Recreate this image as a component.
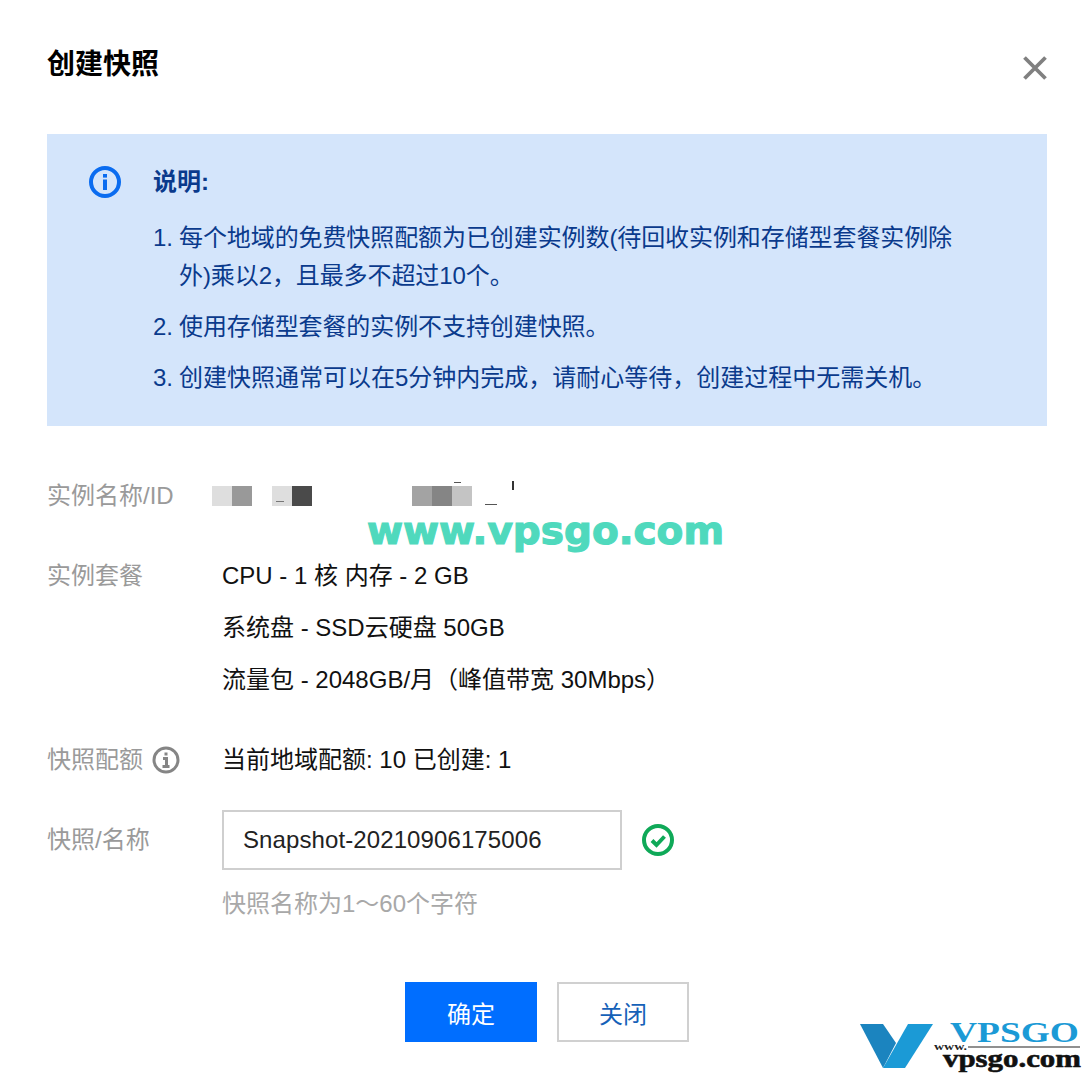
<div class="dialog">
  <header class="head">
    <h1>创建快照</h1>
    <svg class="close" viewBox="0 0 24 24" aria-label="关闭"><path d="M1.500 1.500 22.500 22.500M22.500 1.500 1.500 22.500" /></svg>
  </header>

  <section class="notice">
    <svg class="notice-icon" viewBox="0 0 32 32">
      <circle cx="16" cy="16" r="14" />
      <rect x="14" y="8" width="4" height="3.600" />
      <rect x="14" y="13.500" width="4" height="10.500" />
    </svg>
    <div class="notice-body">
      <h2>说明:</h2>
      <ol>
        <li><span class="n">1.</span><span class="tight">每个地域的免费快照配额为已创建实例数(待回收实例和存储型套餐实例除<br />外)乘以2，且最多不超过10个。</span></li>
        <li><span class="n">2.</span><span class="tight">使用存储型套餐的实例不支持创建快照。</span></li>
        <li><span class="n">3.</span><span>创建快照通常可以在5分钟内完成，请耐心等待，创建过程中无需关机。</span></li>
      </ol>
    </div>
  </section>

  <div class="form">
    <div class="row row-id">
      <div class="label">实例名称/ID</div>
      <div class="mask">
        <i class="m a"></i><i class="m b"></i><i class="gap1"></i><i class="m a"></i><i class="m c"></i><i class="gap2"></i><i class="m d"></i><i class="m e"></i><i class="m a2"></i>
        <i class="speck s1"></i><i class="speck s2"></i><i class="speck s3"></i><i class="speck s4"></i>
      </div>
    </div>
    <div class="row row-plan">
      <div class="label">实例套餐</div>
      <div class="value lines">
        <div>CPU - 1 核 内存 - 2 GB</div>
        <div>系统盘 - SSD云硬盘 50GB</div>
        <div>流量包 - 2048GB/月（峰值带宽 30Mbps）</div>
      </div>
    </div>
    <div class="row row-quota">
      <div class="label with-icon">快照配额
        <svg class="hint" viewBox="0 0 28 28">
          <circle cx="14" cy="14" r="12" />
          <rect x="12.500" y="6.500" width="3" height="3" />
          <path d="M11 12.500h3.500V20M10.500 20.500h7" />
        </svg>
      </div>
      <div class="value">当前地域配额: 10 已创建: 1</div>
    </div>
    <div class="row row-name">
      <div class="label">快照/名称</div>
      <div class="value">
        <div class="input-line">
          <div class="input">Snapshot-20210906175006</div>
          <svg class="ok" viewBox="0 0 32 32">
            <circle cx="16" cy="16" r="14" />
            <path d="M10 16.500 14.500 21 22.500 12.500" />
          </svg>
        </div>
        <div class="help">快照名称为1～60个字符</div>
      </div>
    </div>
  </div>

  <div class="actions">
    <button class="btn primary">确定</button>
    <button class="btn">关闭</button>
  </div>

  <div class="watermark">www.vpsgo.com</div>
  <svg class="logo" viewBox="0 -14 222 68">
    <path d="M0 4H23L36 23 23 48Z" fill="#1b84bf" />
    <path d="M48 4H73L45 48H23Z" fill="#1b9ad6" />
    <text x="90" y="22" class="logo-big" textLength="129" lengthAdjust="spacingAndGlyphs">VPSGO</text>
    <text x="74" y="30" class="logo-www" textLength="33" lengthAdjust="spacingAndGlyphs">www.</text>
    <rect x="108" y="26.500" width="112" height="1" fill="#222" />
    <text x="83" y="47" class="logo-small" textLength="138" lengthAdjust="spacingAndGlyphs">vpsgo.com</text>
  </svg>
</div>

<style>
  :global(body) {
    margin: 0;
    background: #fff;
  }

  .dialog {
    position: relative;
    box-sizing: border-box;
    width: 1092px;
    height: 1074px;
    overflow: hidden;
    padding: 0 45px 0 47px;
    font-family: "Liberation Sans", "Noto Sans CJK SC", sans-serif;
    font-size: 24px;
    color: #111;
  }

  .head {
    display: flex;
    justify-content: space-between;
    align-items: center;
    height: 134px;
    padding-bottom: 4px;
    box-sizing: border-box;
  }

  h1 {
    margin: 0;
    font-size: 28px;
    line-height: 36px;
    font-weight: 700;
    color: #000;
  }

  .close {
    width: 24px;
    height: 24px;
    margin-top: 6px;
    fill: none;
    stroke: #808080;
    stroke-width: 3.800;
  }

  .notice {
    display: flex;
    height: 292px;
    box-sizing: border-box;
    padding: 30px 0 0 42px;
    background: #d4e5fb;
    color: #0a3a8c;
  }

  .notice-icon {
    flex: none;
    width: 32px;
    height: 32px;
    margin: 2px 32px 0 0;
  }

  .notice-icon circle {
    fill: none;
    stroke: #0a6cf0;
    stroke-width: 4;
  }

  .notice-icon rect {
    fill: #0a6cf0;
  }

  h2 {
    margin: 0;
    font-size: 24px;
    line-height: 36px;
    font-weight: 700;
    color: #0a3a8c;
  }

  ol {
    list-style: none;
    margin: 19px 0 0;
    padding: 0;
  }

  li {
    display: flex;
    line-height: 38px;
    margin-bottom: 13px;
  }

  .tight {
    letter-spacing: -0.090px;
  }

  .n {
    flex: none;
    width: 26px;
  }

  .form {
    padding-top: 50px;
  }

  .row {
    display: flex;
  }

  .label {
    flex: none;
    width: 175px;
    line-height: 40px;
    color: #9a9a9a;
  }

  .with-icon {
    display: flex;
    align-items: center;
    gap: 9px;
    height: 40px;
  }

  .hint {
    width: 28px;
    height: 28px;
    fill: none;
    stroke: #858585;
    stroke-width: 3;
  }

  .hint rect {
    fill: #858585;
    stroke: none;
  }

  .value {
    line-height: 40px;
  }

  .row-id {
    height: 40px;
    margin-bottom: 40px;
  }

  .mask {
    position: relative;
    display: flex;
    align-items: center;
    height: 40px;
  }

  .m {
    display: block;
    width: 20px;
    height: 20px;
  }

  .a { background: #dedede; }
  .b { background: #999; }
  .c { background: #4a4a4a; }
  .d { background: #a3a3a3; }
  .e { background: #858585; }
  .a2 { background: #c4c4c4; }
  .mask > .m:first-child { margin-left: -10px; }
  .gap1 { width: 20px; }
  .gap2 { width: 100px; }

  .speck {
    position: absolute;
    display: block;
    background: #333;
  }

  .s1 { left: 54px; top: 25px; width: 8px; height: 1px; background: #777; }
  .s2 { left: 232px; top: 6px; width: 7px; height: 1px; background: #555; }
  .s3 { left: 263px; top: 28px; width: 12px; height: 1px; background: #555; }
  .s4 { left: 290px; top: 5px; width: 2px; height: 9px; }

  .lines div {
    height: 52px;
  }

  .row-plan {
    height: 184px;
  }

  .row-quota {
    height: 70px;
  }

  .row-name .label {
    line-height: 60px;
  }

  .input-line {
    display: flex;
    align-items: center;
  }

  .input {
    box-sizing: border-box;
    width: 400px;
    height: 60px;
    padding-left: 19px;
    border: 2px solid #cfcfcf;
    line-height: 56px;
    letter-spacing: 0.100px;
    color: #222;
  }

  .ok {
    width: 32px;
    height: 32px;
    margin-left: 20px;
    fill: none;
    stroke: #0fa958;
    stroke-width: 4;
  }

  .help {
    margin-top: 14px;
    color: #a8a8a8;
  }

  .actions {
    display: flex;
    justify-content: center;
    gap: 20px;
    padding-top: 58px;
  }

  .btn {
    box-sizing: border-box;
    width: 132px;
    height: 60px;
    padding: 0;
    border: 2px solid #d0d0d0;
    background: #fff;
    color: #1561b8;
    font: inherit;
  }

  .primary {
    border-color: #006eff;
    background: #006eff;
    color: #fff;
  }

  .watermark {
    position: absolute;
    left: 367px;
    top: 509px;
    font-family: "DejaVu Sans", sans-serif;
    font-size: 39px;
    line-height: 44px;
    font-weight: 700;
    color: #4fd9bd;
    -webkit-text-stroke: 1.200px #4fd9bd;
  }

  .logo {
    position: absolute;
    left: 860px;
    top: 1006px;
    width: 222px;
    height: 68px;
  }

  .logo-big {
    font-family: "Liberation Serif", serif;
    font-weight: 700;
    font-size: 29px;
    fill: #1b9ad6;
  }

  .logo-www {
    font-family: "Liberation Serif", serif;
    font-weight: 700;
    font-size: 11px;
    fill: #222;
  }

  .logo-small {
    font-family: "Liberation Serif", serif;
    font-weight: 700;
    font-size: 26px;
    fill: #111;
    stroke: #111;
    stroke-width: 0.600;
  }
</style>
